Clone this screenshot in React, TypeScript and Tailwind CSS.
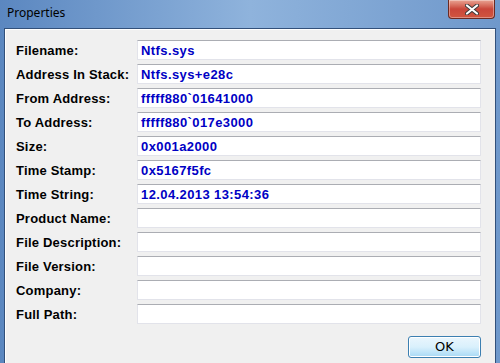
import React from 'react';

const rows = [
  { label: 'Filename:', value: 'Ntfs.sys' },
  { label: 'Address In Stack:', value: 'Ntfs.sys+e28c' },
  { label: 'From Address:', value: 'fffff880`01641000' },
  { label: 'To Address:', value: 'fffff880`017e3000' },
  { label: 'Size:', value: '0x001a2000' },
  { label: 'Time Stamp:', value: '0x5167f5fc' },
  { label: 'Time String:', value: '12.04.2013 13:54:36' },
  { label: 'Product Name:', value: '' },
  { label: 'File Description:', value: '' },
  { label: 'File Version:', value: '' },
  { label: 'Company:', value: '' },
  { label: 'Full Path:', value: '' },
];

const CloseButton = () => (
  <div className="mr-[5px] w-[47px] h-[19px] rounded-b-[4px] border border-t-0 border-[#6b2a22] bg-gradient-to-b from-[#e8a393] via-[#c9463a] to-[#d0553f] flex items-center justify-center shadow-[inset_0_0_0_1px_rgba(255,255,255,0.35)]">
    <svg width="14" height="11" viewBox="0 0 14 11">
      <path d="M2 1.5 L12 9.5 M12 1.5 L2 9.5" stroke="#3a3a3a" strokeWidth="4" strokeLinecap="round" />
      <path d="M2 1.5 L12 9.5 M12 1.5 L2 9.5" stroke="#ffffff" strokeWidth="2.2" strokeLinecap="round" />
    </svg>
  </div>
);

export default function App() {
  return (
    <div className="w-[500px] h-[363px] overflow-hidden flex flex-col bg-gradient-to-r from-[#5b87c0] via-[#8fb3dc] to-[#6f98cb]">
      <div className="h-[28px] flex items-start justify-between shrink-0">
        <span
          className="pl-[7px] pt-[6px] text-[12px] leading-[14px] text-black"
          style={{ fontFamily: '"Noto Sans", "Open Sans", sans-serif' }}
        >
          Properties
        </span>
        <CloseButton />
      </div>
      <div className="flex-1 mx-[4px] border border-b-0 border-[#32507a] bg-[#f0f0f0] shadow-[inset_1px_1px_0_#ffffff]">
        <div
          className="pt-[11px] pl-[11px] pr-[14px] flex flex-col gap-[4px]"
          style={{ fontFamily: '"Liberation Sans", Arial, sans-serif' }}
        >
          {rows.map((r) => (
            <div key={r.label} className="flex items-center h-[20px]">
              <div className="w-[121px] pt-[1px] text-[13px] font-bold tracking-[0.2px] text-black">{r.label}</div>
              <div className="flex-1 h-[20px] bg-white border border-[#e2e3ea] border-t-[#abadb3] flex items-center pl-[3px] pt-[1px] text-[13px] font-bold tracking-[0.4px] text-[#0000c4]">
                {r.value}
              </div>
            </div>
          ))}
          <div className="flex justify-end mt-[8px]">
            <button
              className="w-[73px] h-[22px] rounded-[3px] border border-[#3c7fb1] bg-gradient-to-b from-[#eaf6fd] via-[#d9f0fc] to-[#a7d9f5] text-[13px] text-black shadow-[inset_0_0_0_1px_#ffffff]"
              style={{ fontFamily: '"DejaVu Sans", sans-serif' }}
            >
              OK
            </button>
          </div>
        </div>
      </div>
    </div>
  );
}
